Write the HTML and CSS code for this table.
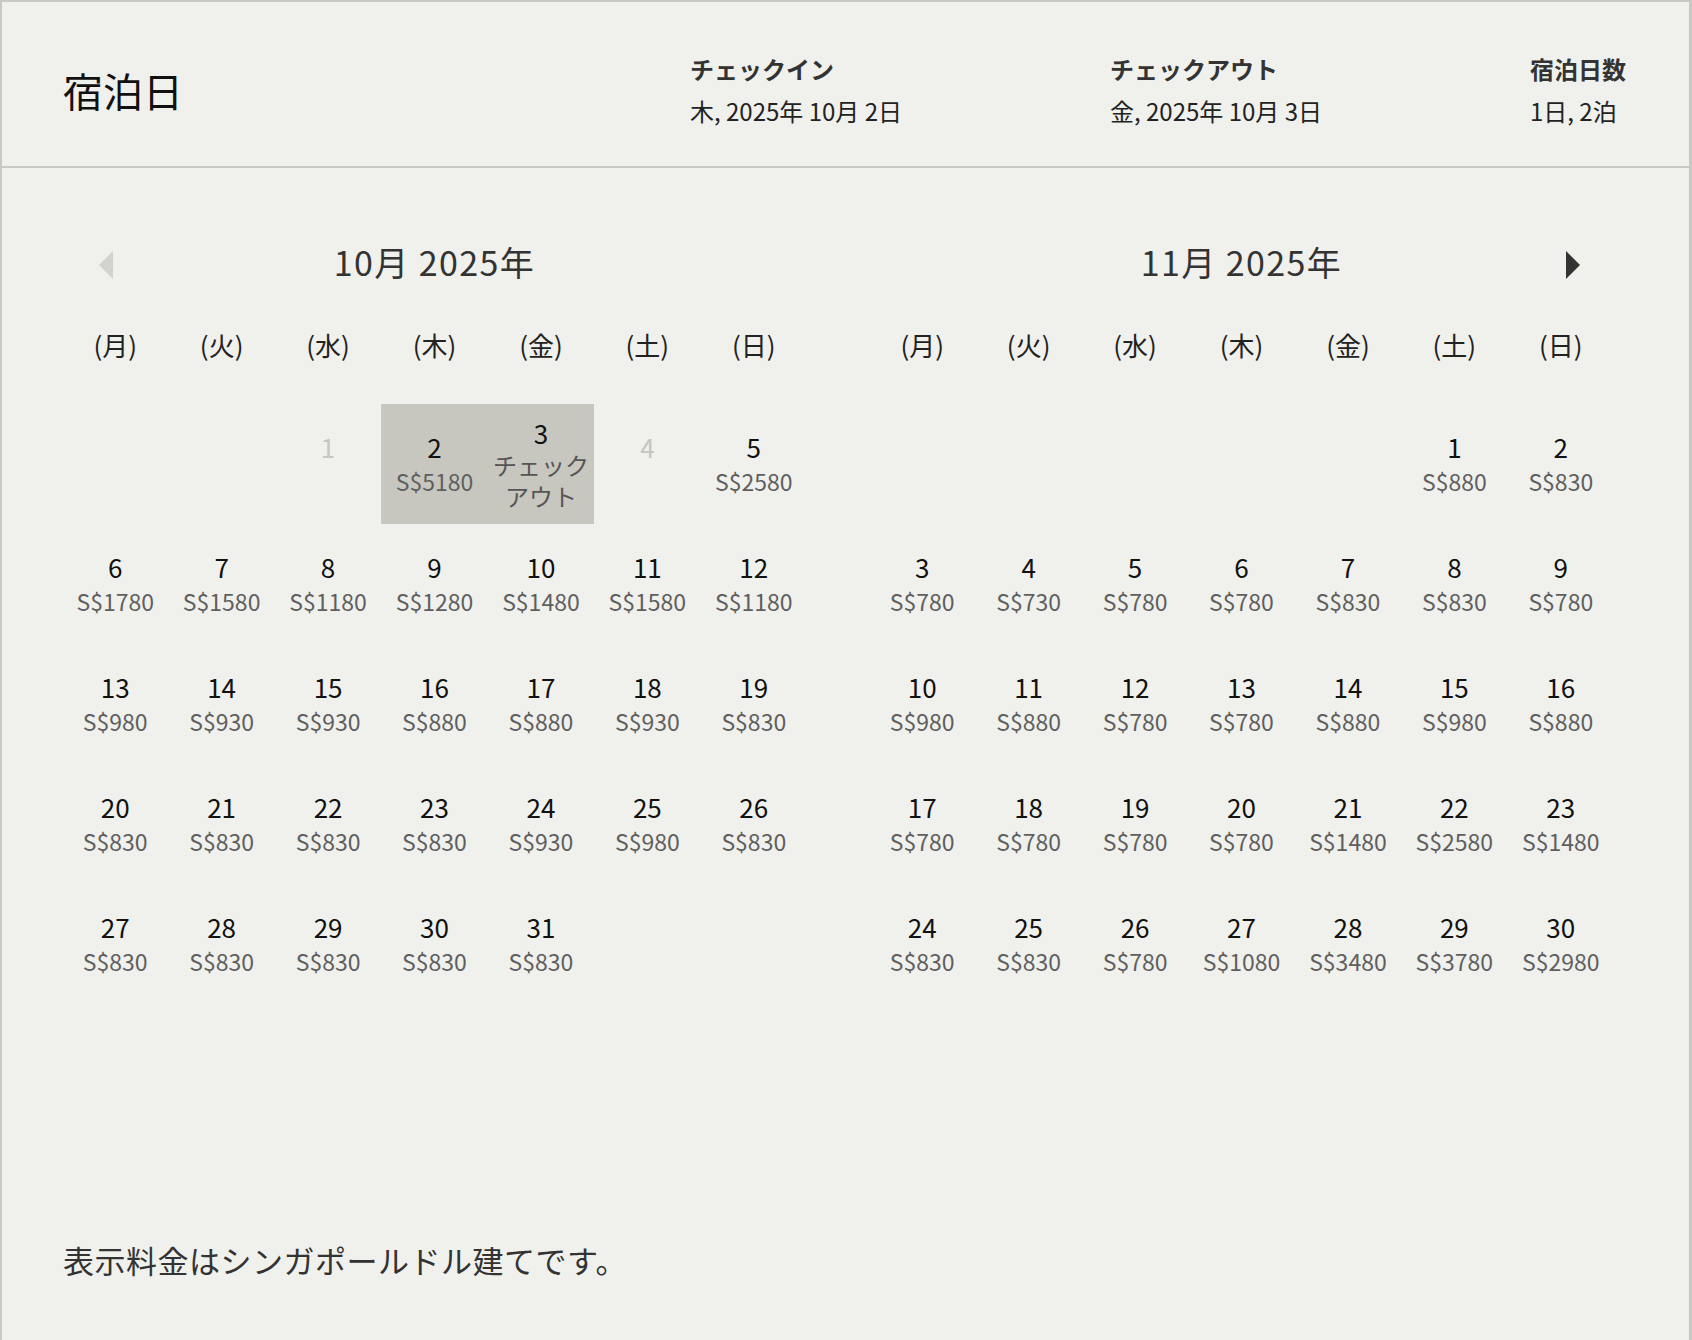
FILE: index.html
```html
<!DOCTYPE html>
<html lang="ja">
<head>
<meta charset="utf-8">
<title>宿泊日</title>
<link rel="stylesheet" href="styles.css">
</head>
<body>
<div class="panel">
  <header class="header">
    <h1 class="title">宿泊日</h1>
    <div class="info-group">
      <div class="info">
        <div class="info-label">チェックイン</div>
        <div class="info-value">木, 2025年 10月 2日</div>
      </div>
      <div class="info">
        <div class="info-label">チェックアウト</div>
        <div class="info-value">金, 2025年 10月 3日</div>
      </div>
      <div class="info info-last">
        <div class="info-label">宿泊日数</div>
        <div class="info-value">1日, 2泊</div>
      </div>
    </div>
  </header>

  <section class="calendars">
    <div class="month">
      <div class="month-head">
        <span class="nav nav-prev"><svg width="14" height="28" viewBox="0 0 14 28"><polygon points="14,0 14,28 0,14" fill="#d2d2cf"/></svg></span>
        <h2 class="month-title">10月 2025年</h2>
        <span></span>
      </div>
      <div class="weekdays">
        <span>(月)</span><span>(火)</span><span>(水)</span><span>(木)</span><span>(金)</span><span>(土)</span><span>(日)</span>
      </div>
      <div class="days">
        <div class="day empty"></div>
        <div class="day empty"></div>
        <div class="day disabled"><span class="num">1</span><span class="price">&nbsp;</span></div>
        <div class="day selected"><span class="num">2</span><span class="price">S$5180</span></div>
        <div class="day selected"><span class="num">3</span><span class="note">チェック<br>アウト</span></div>
        <div class="day disabled"><span class="num">4</span><span class="price">&nbsp;</span></div>
        <div class="day"><span class="num">5</span><span class="price">S$2580</span></div>

        <div class="day"><span class="num">6</span><span class="price">S$1780</span></div>
        <div class="day"><span class="num">7</span><span class="price">S$1580</span></div>
        <div class="day"><span class="num">8</span><span class="price">S$1180</span></div>
        <div class="day"><span class="num">9</span><span class="price">S$1280</span></div>
        <div class="day"><span class="num">10</span><span class="price">S$1480</span></div>
        <div class="day"><span class="num">11</span><span class="price">S$1580</span></div>
        <div class="day"><span class="num">12</span><span class="price">S$1180</span></div>

        <div class="day"><span class="num">13</span><span class="price">S$980</span></div>
        <div class="day"><span class="num">14</span><span class="price">S$930</span></div>
        <div class="day"><span class="num">15</span><span class="price">S$930</span></div>
        <div class="day"><span class="num">16</span><span class="price">S$880</span></div>
        <div class="day"><span class="num">17</span><span class="price">S$880</span></div>
        <div class="day"><span class="num">18</span><span class="price">S$930</span></div>
        <div class="day"><span class="num">19</span><span class="price">S$830</span></div>

        <div class="day"><span class="num">20</span><span class="price">S$830</span></div>
        <div class="day"><span class="num">21</span><span class="price">S$830</span></div>
        <div class="day"><span class="num">22</span><span class="price">S$830</span></div>
        <div class="day"><span class="num">23</span><span class="price">S$830</span></div>
        <div class="day"><span class="num">24</span><span class="price">S$930</span></div>
        <div class="day"><span class="num">25</span><span class="price">S$980</span></div>
        <div class="day"><span class="num">26</span><span class="price">S$830</span></div>

        <div class="day"><span class="num">27</span><span class="price">S$830</span></div>
        <div class="day"><span class="num">28</span><span class="price">S$830</span></div>
        <div class="day"><span class="num">29</span><span class="price">S$830</span></div>
        <div class="day"><span class="num">30</span><span class="price">S$830</span></div>
        <div class="day"><span class="num">31</span><span class="price">S$830</span></div>
      </div>
    </div>

    <div class="month">
      <div class="month-head">
        <span></span>
        <h2 class="month-title">11月 2025年</h2>
        <span class="nav nav-next"><svg width="14" height="28" viewBox="0 0 14 28"><polygon points="0,0 0,28 14,14" fill="#333333"/></svg></span>
      </div>
      <div class="weekdays">
        <span>(月)</span><span>(火)</span><span>(水)</span><span>(木)</span><span>(金)</span><span>(土)</span><span>(日)</span>
      </div>
      <div class="days">
        <div class="day empty"></div>
        <div class="day empty"></div>
        <div class="day empty"></div>
        <div class="day empty"></div>
        <div class="day empty"></div>
        <div class="day"><span class="num">1</span><span class="price">S$880</span></div>
        <div class="day"><span class="num">2</span><span class="price">S$830</span></div>

        <div class="day"><span class="num">3</span><span class="price">S$780</span></div>
        <div class="day"><span class="num">4</span><span class="price">S$730</span></div>
        <div class="day"><span class="num">5</span><span class="price">S$780</span></div>
        <div class="day"><span class="num">6</span><span class="price">S$780</span></div>
        <div class="day"><span class="num">7</span><span class="price">S$830</span></div>
        <div class="day"><span class="num">8</span><span class="price">S$830</span></div>
        <div class="day"><span class="num">9</span><span class="price">S$780</span></div>

        <div class="day"><span class="num">10</span><span class="price">S$980</span></div>
        <div class="day"><span class="num">11</span><span class="price">S$880</span></div>
        <div class="day"><span class="num">12</span><span class="price">S$780</span></div>
        <div class="day"><span class="num">13</span><span class="price">S$780</span></div>
        <div class="day"><span class="num">14</span><span class="price">S$880</span></div>
        <div class="day"><span class="num">15</span><span class="price">S$980</span></div>
        <div class="day"><span class="num">16</span><span class="price">S$880</span></div>

        <div class="day"><span class="num">17</span><span class="price">S$780</span></div>
        <div class="day"><span class="num">18</span><span class="price">S$780</span></div>
        <div class="day"><span class="num">19</span><span class="price">S$780</span></div>
        <div class="day"><span class="num">20</span><span class="price">S$780</span></div>
        <div class="day"><span class="num">21</span><span class="price">S$1480</span></div>
        <div class="day"><span class="num">22</span><span class="price">S$2580</span></div>
        <div class="day"><span class="num">23</span><span class="price">S$1480</span></div>

        <div class="day"><span class="num">24</span><span class="price">S$830</span></div>
        <div class="day"><span class="num">25</span><span class="price">S$830</span></div>
        <div class="day"><span class="num">26</span><span class="price">S$780</span></div>
        <div class="day"><span class="num">27</span><span class="price">S$1080</span></div>
        <div class="day"><span class="num">28</span><span class="price">S$3480</span></div>
        <div class="day"><span class="num">29</span><span class="price">S$3780</span></div>
        <div class="day"><span class="num">30</span><span class="price">S$2980</span></div>
      </div>
    </div>
  </section>

  <p class="footnote">表示料金はシンガポールドル建てです。</p>
</div>
</body>
</html>
```

FILE: styles.css
```css
* {
  box-sizing: border-box;
}

html, body {
  margin: 0;
  padding: 0;
  background: #f0f0ec;
}

body {
  font-family: "Noto Sans CJK JP", "Noto Sans", sans-serif;
  color: #1a1a1a;
}

.panel {
  min-height: 1340px;
  background: #f0f0ec;
  border-top: 2px solid #c9c9c4;
  border-left: 2px solid #c9c9c4;
  border-right: 3px solid #c9c9c4;
}

/* Header */
.header {
  display: flex;
  align-items: center;
  height: 166px;
  padding: 12px 63px 0 61px;
  border-bottom: 2px solid #c9c9c4;
}

.title {
  margin: 0;
  font-size: 40px;
  font-weight: 400;
  line-height: 48px;
  color: #111;
}

.info-group {
  display: flex;
  margin-left: auto;
}

.info {
  width: 420px;
  display: flex;
  flex-direction: column;
  gap: 10px;
}

.info-last {
  width: auto;
}

.info-label {
  font-size: 24px;
  font-weight: 700;
  line-height: 32px;
  color: #333;
}

.info-value {
  font-size: 24px;
  line-height: 32px;
  color: #222;
}

/* Calendars */
.calendars {
  display: flex;
  gap: 62px;
  padding: 74px 0 0 60px;
}

.month {
  width: 745px;
}

.month-head {
  display: grid;
  grid-template-columns: 1fr auto 1fr;
  align-items: center;
  height: 40px;
}

.month-title {
  margin: 0;
  font-size: 34px;
  font-weight: 400;
  line-height: 40px;
  color: #333;
  letter-spacing: 1.4px;
}

.nav {
  display: flex;
  align-items: center;
  margin-top: 6px;
}

.nav-prev {
  justify-self: start;
  margin-left: 37px;
}

.nav-next {
  justify-self: end;
  margin-right: 34px;
}

.weekdays {
  display: grid;
  grid-template-columns: repeat(7, 1fr);
  margin-top: 43px;
  height: 40px;
  line-height: 40px;
  font-size: 26px;
  text-align: center;
  color: #222;
}

.days {
  display: grid;
  grid-template-columns: repeat(7, 1fr);
  grid-auto-rows: 120px;
  margin-top: 39px;
}

.day {
  display: flex;
  flex-direction: column;
  align-items: center;
  justify-content: center;
  text-align: center;
}

.day.selected {
  background: #c7c7bf;
}

.num {
  font-size: 26px;
  line-height: 32px;
  color: #111;
}

.price {
  margin-top: 2px;
  font-size: 23px;
  line-height: 32px;
  color: #5f5f5f;
}

.note {
  font-size: 24px;
  line-height: 31px;
  color: #555;
}

.day.disabled .num {
  color: #c5c5c2;
}

.footnote {
  margin: 236px 0 0 61px;
  font-size: 31px;
  line-height: 40px;
  letter-spacing: 0.5px;
  color: #333;
}
```
